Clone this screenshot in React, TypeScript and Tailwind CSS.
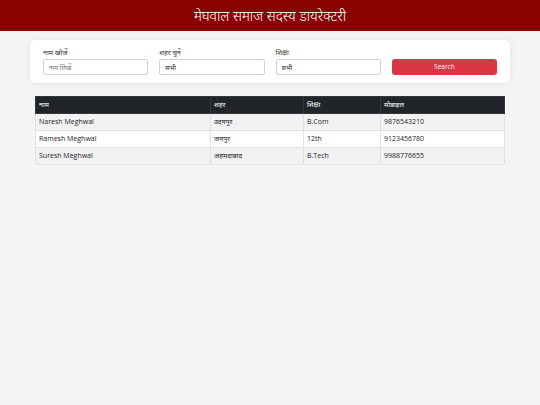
const MEMBERS = [
  { name: 'Naresh Meghwal', city: 'उदयपुर', edu: 'B.Com', mobile: '9876543210' },
  { name: 'Ramesh Meghwal', city: 'जयपुर', edu: '12th', mobile: '9123456780' },
  { name: 'Suresh Meghwal', city: 'अहमदाबाद', edu: 'B.Tech', mobile: '9988776655' },
]

const FONT = "font-['Open_Sans','Noto_Sans',sans-serif]"

function Field({ label, placeholder, value }: { label: string; placeholder?: string; value?: string }) {
  return (
    <div className="flex flex-col gap-[2px] w-[106px]">
      <label className="text-[7px] leading-[9px] text-[#333]">{label}</label>
      <input
        className="h-[16px] w-full rounded-[2px] border border-[#ced4da] bg-white px-[5px] text-[6.5px] text-[#212529] placeholder:text-[#777] outline-none"
        placeholder={placeholder}
        defaultValue={value}
      />
    </div>
  )
}

export default function App() {
  return (
    <div className={`min-h-[405px] w-[540px] bg-[#f4f4f4] ${FONT}`}>
      <header className="flex h-[31px] items-center justify-center bg-[#8b0000] text-[14px] font-light text-white">
        मेघवाल समाज सदस्य डायरेक्टरी
      </header>

      <div className="mx-[30px] mt-[9px] flex items-end gap-[11px] rounded-[5px] bg-white px-[13px] pb-[8px] pt-[8px] shadow-[0_0_6px_rgba(0,0,0,0.08)]">
        <Field label="नाम खोजें" placeholder="नाम लिखें" />
        <Field label="शहर चुनें" value="सभी" />
        <Field label="शिक्षा" value="सभी" />
        <button className="h-[16px] w-[106px] rounded-[3px] bg-[#dc3545] text-[6.5px] text-white">Search</button>
      </div>

      <div className="mx-[35px] mt-[13px]">
        <table className="w-full border-collapse text-[7px] text-[#212529]">
          <thead>
            <tr className="bg-[#212529] text-left text-white">
              <th className="h-[17px] w-[175px] border border-[#32383e] px-[3px] font-normal">नाम</th>
              <th className="w-[93px] border border-[#32383e] px-[3px] font-normal">शहर</th>
              <th className="w-[77px] border border-[#32383e] px-[3px] font-normal">शिक्षा</th>
              <th className="border border-[#32383e] px-[3px] font-normal">मोबाइल</th>
            </tr>
          </thead>
          <tbody>
            {MEMBERS.map((m, i) => (
              <tr key={m.mobile} className={i % 2 === 0 ? 'bg-[#f2f2f2]' : 'bg-white'}>
                <td className="h-[17px] border border-[#dee2e6] px-[3px]">{m.name}</td>
                <td className="border border-[#dee2e6] px-[3px]">{m.city}</td>
                <td className="border border-[#dee2e6] px-[3px]">{m.edu}</td>
                <td className="border border-[#dee2e6] px-[3px]">{m.mobile}</td>
              </tr>
            ))}
          </tbody>
        </table>
      </div>
    </div>
  )
}
